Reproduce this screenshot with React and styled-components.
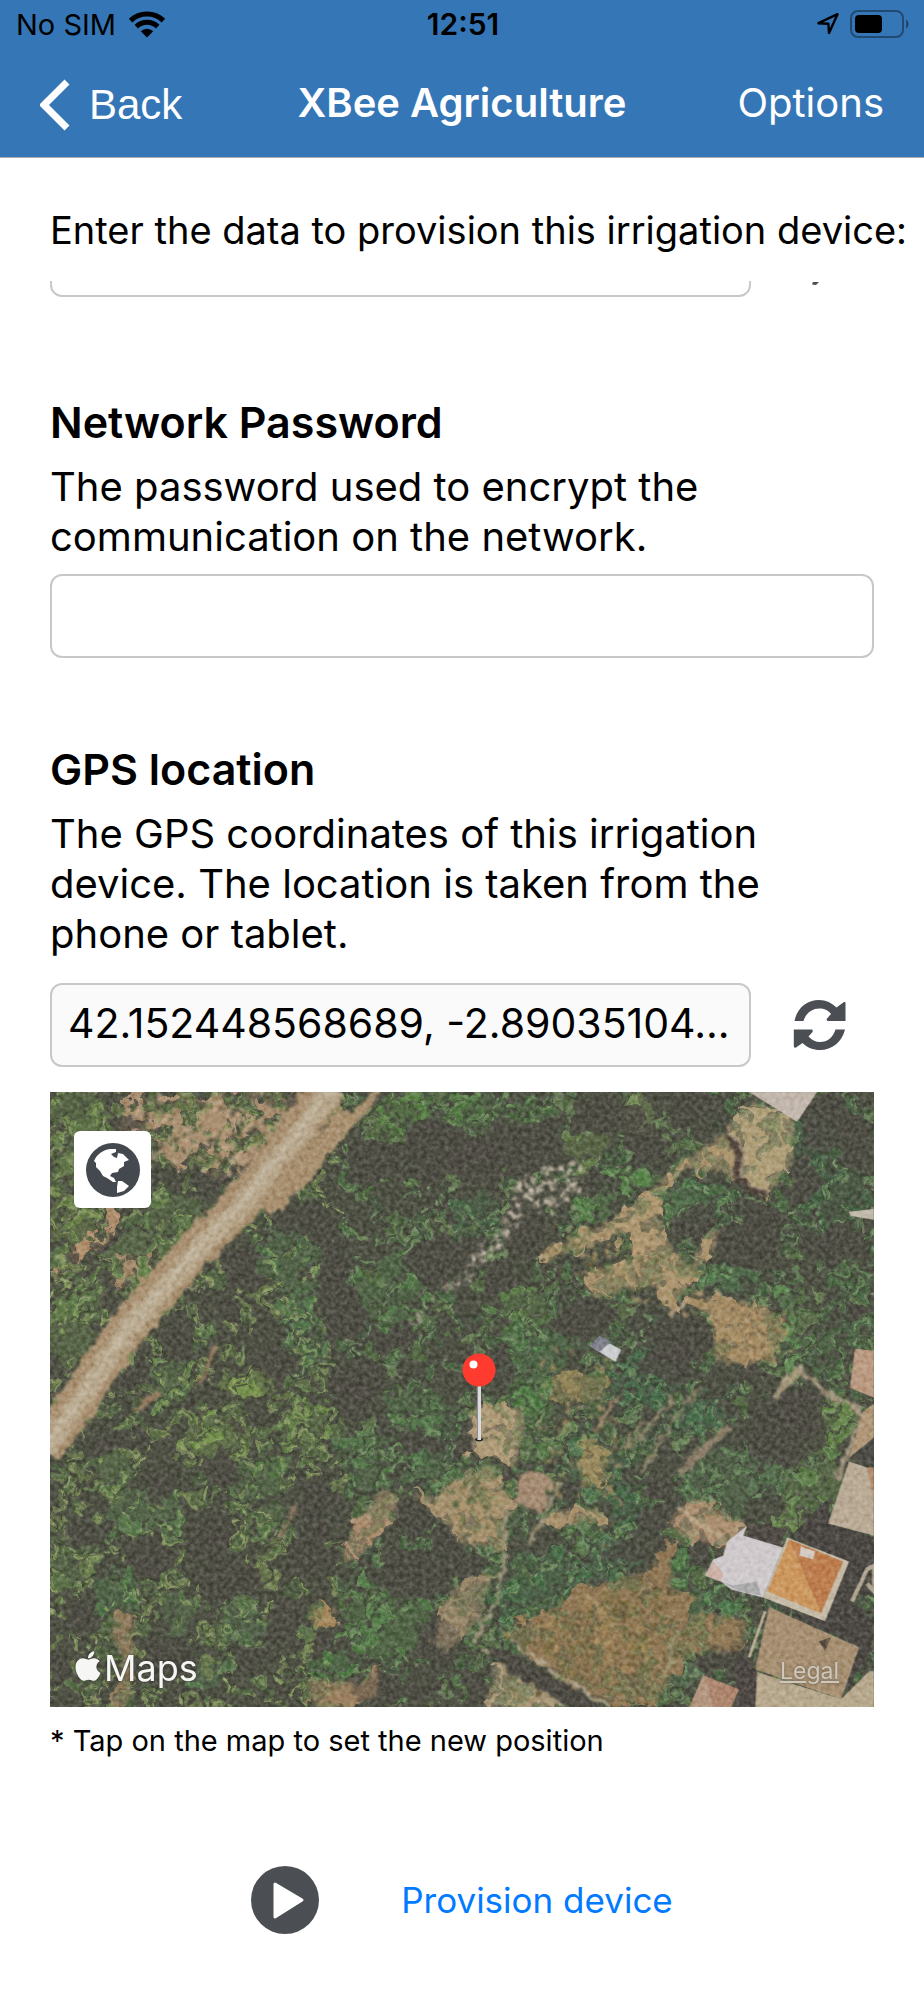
import React, { useState } from "react";
import styled, { createGlobalStyle } from "styled-components";
import { FaApple } from "react-icons/fa";

const GlobalStyle = createGlobalStyle`
  * {
    box-sizing: border-box;
  }
  body {
    margin: 0;
    background: #ffffff;
    color: #000000;
    font-family: Inter, "Liberation Sans", sans-serif;
  }
`;

// small seeded generator, so the trees stay in place between renders
const makeRandom = (seed) => () => {
    seed = (seed * 16807) % 2147483647;
    return seed / 2147483647;
};

// [cx, cy, rx, ry]
const shadows = [
    [384, 55, 40, 40], [324, 68, 30, 25], [251, 128, 35, 20], [278, 168, 18, 36], [191, 175, 25, 22],
    [291, 221, 24, 40], [171, 221, 20, 14], [384, 175, 30, 30], [131, 241, 18, 28], [224, 275, 25, 18],
    [311, 288, 30, 20], [60, 201, 14, 25], [84, 285, 20, 13], [344, 248, 25, 14], [168, 85, 20, 12],
    [74, 31, 22, 8], [51, 148, 20, 9], [251, 5, 18, 10], [468, 55, 50, 32], [428, 71, 30, 25],
    [561, 25, 40, 22], [598, 51, 25, 18], [644, 15, 30, 20], [544, 95, 16, 14], [474, 138, 25, 30],
    [448, 188, 18, 30], [421, 161, 18, 20], [644, 131, 25, 18], [694, 155, 34, 25], [711, 128, 20, 20],
    [778, 31, 28, 30], [804, 48, 18, 35], [751, 88, 18, 30], [788, 155, 35, 25], [538, 228, 35, 20],
    [634, 248, 35, 34], [618, 275, 30, 20], [451, 271, 18, 15], [698, 281, 20, 12], [811, 221, 12, 8],
    [304, 308, 25, 25], [368, 351, 30, 12], [174, 378, 22, 20], [114, 395, 20, 18], [268, 415, 20, 35],
    [158, 445, 25, 24], [101, 465, 25, 20], [178, 485, 40, 24], [258, 465, 30, 28], [361, 425, 30, 17],
    [364, 485, 45, 30], [238, 531, 22, 30], [118, 565, 25, 22], [198, 565, 20, 14], [344, 598, 50, 16],
    [31, 525, 25, 13], [11, 575, 12, 20], [274, 551, 15, 12], [398, 448, 15, 20], [728, 341, 42, 44],
    [751, 318, 25, 25], [458, 385, 15, 12], [614, 398, 22, 14], [604, 428, 18, 14], [524, 401, 14, 11],
    [578, 461, 20, 11], [648, 461, 16, 18], [421, 475, 15, 16], [417, 350, 8, 20], [428, 595, 16, 18],
    [671, 570, 32, 16], [391, 555, 26, 30], [66, 350, 26, 12], [30, 440, 18, 10],
];

// [cx, cy, rx, ry, colour]
const groves = [
    [40, 60, 40, 40, "#5f7a44"], [20, 110, 24, 50, "#6b8646"], [120, 130, 30, 30, "#5c7a45"],
    [80, 160, 26, 20, "#64824a"], [48, 200, 26, 26, "#5f8048"], [20, 240, 26, 40, "#617d46"],
    [350, 25, 26, 26, "#56863f"], [400, 12, 30, 14, "#4e7a3e"], [240, 170, 30, 40, "#507748"],
    [345, 200, 32, 40, "#507a45"], [255, 235, 22, 40, "#52794a"], [200, 290, 30, 16, "#7c9e4b"],
    [170, 345, 34, 24, "#74974a"], [120, 290, 24, 24, "#628649"], [150, 230, 22, 18, "#5d7f4c"],
    [95, 420, 40, 24, "#587c4b"], [320, 370, 28, 30, "#4f7546"], [370, 318, 34, 24, "#507a47"],
    [388, 375, 22, 22, "#4f7c48"], [70, 500, 24, 24, "#4d7a47"], [335, 530, 40, 40, "#507f44"],
    [280, 575, 24, 14, "#4c8043"], [210, 430, 26, 18, "#5c7e49"], [190, 530, 28, 16, "#53704a"],
    [160, 580, 18, 16, "#52754b"], [444, 22, 60, 16, "#4e7040"], [590, 20, 16, 24, "#7d9557"],
    [535, 60, 20, 20, "#667f45"], [545, 110, 20, 15, "#538545"], [580, 88, 20, 12, "#558647"],
    [425, 125, 26, 22, "#456a45"], [540, 245, 20, 14, "#4d6f46"], [470, 215, 30, 18, "#5a7f46"],
    [490, 260, 30, 24, "#4b7a45"], [480, 300, 22, 20, "#4c8042"], [595, 285, 36, 26, "#426d48"],
    [650, 108, 24, 20, "#4c7a49"], [620, 110, 18, 18, "#507848"], [680, 185, 34, 14, "#4f8a4e"],
    [740, 235, 12, 40, "#5d9150"], [770, 60, 30, 40, "#3f5c42"], [790, 100, 30, 40, "#40603f"],
    [800, 190, 20, 20, "#45693f"], [770, 260, 26, 20, "#4a6440"], [675, 385, 42, 36, "#53744c"],
    [490, 340, 24, 30, "#567b45"], [545, 380, 30, 28, "#47714a"], [580, 410, 22, 22, "#436b45"],
    [470, 430, 16, 14, "#4f7346"], [525, 436, 22, 12, "#4b6c42"], [560, 465, 26, 20, "#466f4a"],
    [500, 490, 46, 30, "#437045"], [470, 520, 24, 18, "#417244"], [630, 480, 14, 18, "#4c7f45"],
    [665, 520, 26, 26, "#4e7f4c"], [790, 330, 16, 26, "#668d45"], [765, 390, 30, 34, "#5e8347"],
    [740, 425, 16, 12, "#6b8b4c"], [636, 582, 18, 14, "#587f56"], [650, 320, 26, 20, "#44704a"],
    [430, 330, 10, 10, "#4c7044"], [25, 20, 30, 20, "#5e7c42"], [20, 470, 24, 30, "#5b7546"],
    [60, 380, 24, 20, "#5d7c48"], [210, 385, 30, 24, "#567a46"], [250, 330, 26, 26, "#648546"],
    [130, 520, 22, 18, "#58774a"],
];

const clearings = [
    { d: "M70 0 L262 0 L235 50 L190 90 L150 75 L110 70 L75 40 Z", fill: "#a4896b" },
    { d: "M55 118 L76 120 L50 150 L20 180 L4 195 L2 178 L35 145 Z", fill: "#ac8a67" },
    { d: "M64 175 L140 150 L110 200 L70 215 Z", fill: "#9c8363" },
    { d: "M490 160 L560 130 L600 98 L650 58 L676 40 L690 56 L696 85 L640 75 L606 104 L612 140 L640 180 L660 140 L672 142 L622 218 L600 190 L545 205 L536 180 L590 170 L580 140 L520 160 L496 172 Z", fill: "#a8906a" },
    { d: "M690 22 L705 8 L748 30 L740 76 L720 100 L686 82 L694 52 L676 38 Z", fill: "#aa9973" },
    { d: "M640 205 L716 212 L736 240 L722 265 L700 274 L662 268 L668 235 Z", fill: "#9f8760" },
    { d: "M420 320 L446 310 L474 318 L472 350 L466 376 L450 366 L424 366 Z", fill: "#ab9673" },
    { d: "M412 384 L440 376 L464 410 L450 440 L456 460 L412 450 L385 420 L360 402 L385 405 L411 385 Z", fill: "#a18c69" },
    { d: "M333 396 L350 410 L326 450 L298 472 L292 462 L304 436 Z", fill: "#a58768" },
    { d: "M502 420 L548 416 L556 430 L505 434 Z", fill: "#a48c68" },
    { d: "M646 406 L698 432 L680 456 L636 446 L618 434 L626 420 Z", fill: "#a6896a" },
    { d: "M606 462 L622 455 L622 496 L642 505 L636 530 L676 522 L700 530 L690 560 L640 560 L606 610 L560 616 L462 550 L454 544 L510 514 L540 496 L600 480 Z", fill: "#8b7350" },
    { d: "M446 574 L466 570 L530 616 L436 616 Z", fill: "#a49272" },
    { d: "M66 526 L84 524 L84 560 L78 616 L62 616 L74 570 L62 548 Z", fill: "#8c7758" },
    { d: "M262 515 L286 520 L278 536 L260 530 Z", fill: "#a28459" },
    { d: "M258 590 L310 592 L330 575 L326 604 L290 616 L264 614 Z", fill: "#967b5b" },
    { d: "M512 278 L560 288 L548 310 L500 308 Z", fill: "#8c7e53" },
    { d: "M536 348 L560 360 L552 390 L532 396 L528 370 Z", fill: "#958558" },
    { d: "M400 500 L436 480 L444 484 L430 530 L398 560 L384 552 Z", fill: "#938264" },
];

const walls = [
    { d: "M462 552 L520 590 L560 616", stroke: "#aca186", width: 3 },
    { d: "M434 558 L490 596 L512 616", stroke: "#b8ab8e", width: 3 },
    { d: "M424 552 L446 512 L456 470 L454 420", stroke: "#978c72", width: 4 },
    { d: "M510 392 L492 430 L478 456", stroke: "#8f866a", width: 4 },
    { d: "M674 36 L690 60 L686 88 L718 104", stroke: "#4c4038", width: 6 },
    { d: "M676 34 L694 58 L690 84 L718 100", stroke: "#9f8b78", width: 2 },
    { d: "M624 306 L586 350 L572 356", stroke: "#857c62", width: 4 },
    { d: "M650 296 L606 356 L592 382", stroke: "#857c62", width: 3 },
    { d: "M570 304 L544 340", stroke: "#997c62", width: 4 },
    { d: "M594 330 L572 356", stroke: "#857a5e", width: 3 },
    { d: "M680 334 L630 382", stroke: "#857661", width: 8 },
    { d: "M628 416 L672 448", stroke: "#b6a184", width: 4 },
    { d: "M724 308 L752 274", stroke: "#a09376", width: 7 },
    { d: "M752 276 L790 314", stroke: "#9f8f76", width: 4 },
    { d: "M780 300 L814 322 L806 346 L788 388", stroke: "#9d9079", width: 5 },
    { d: "M534 500 L574 546", stroke: "#a08a60", width: 3 },
    { d: "M624 566 L614 586 L628 540", stroke: "#989574", width: 2 },
    { d: "M640 205 L620 226", stroke: "#b69e7c", width: 4 },
    { d: "M166 255 L150 292", stroke: "#94785c", width: 5 },
    { d: "M108 300 L86 318", stroke: "#94785c", width: 5 },
    { d: "M246 414 L232 446", stroke: "#80705a", width: 4 },
];

const speckle = (random, colours, count, x1, y1, x2, y2, spread, size) =>
    Array.from({ length: count }, (_, i) => {
        const t = random();
        return {
            x: x1 + (x2 - x1) * t + (random() - 0.5) * spread,
            y: y1 + (y2 - y1) * t + (random() - 0.5) * spread,
            r: size * (0.5 + random()),
            fill: colours[i % colours.length],
        };
    });

const inEllipse = (x, y, size) => ([cx, cy, rx, ry]) =>
    ((x - cx) / rx) ** 2 + ((y - cy) / ry) ** 2 < size;

const olive = ["#5b6b43", "#556a42", "#4f6440", "#677848", "#4b5a3e", "#5a7345"];
const deep = ["#4a6141", "#46603f", "#50693f", "#455741", "#4b6b43", "#5a6d45"];

// every crown is a dark upper edge, a body, and a few sunlit leaves
const buildTrees = () => {
    const random = makeRandom(4217);
    const crowns = [];
    for (let i = 0; i < 2600; i++) {
        const x = random() * 850 - 12;
        const y = random() * 640 - 12;
        const grove = groves.find(inEllipse(x, y, 1.3));
        if (shadows.some(inEllipse(x, y, grove ? 0.6 : 0.9))) continue;
        const palette = x < 290 ? olive : deep;
        const r = 3 + random() * 5;
        const leaves = Array.from({ length: 3 }, () => ({
            x: x + (random() - 0.4) * r * 2,
            y: y + (random() - 0.4) * r * 2,
            r: 1 + random() * 2,
        }));
        const fill = grove && random() < 0.75 ? grove[4] : palette[Math.floor(random() * palette.length)];
        crowns.push({ x, y, r, fill, leaves, light: x < 290 ? "#96a568" : "#799665" });
    }
    return crowns;
};

const trees = buildTrees();
const random = makeRandom(913);
const gaps = speckle(random, ["#48463f", "#454a3c"], 700, 412, 0, 412, 616, 830, 3.4);
const rocks = [
    ...speckle(random, ["#b9ad9b", "#8f8776", "#c6bba8"], 80, 520, 84, 475, 112, 40, 2),
    ...speckle(random, ["#b9ad9b", "#8f8776", "#cdc3b2"], 50, 478, 114, 412, 188, 14, 1.7),
    ...speckle(random, ["#a99e89", "#8f8776"], 26, 412, 185, 360, 232, 10, 1.5),
];
const scrub = [
    ...speckle(random, ["#5a5543", "#63683f", "#c0a283"], 260, 110, 20, 225, 40, 90, 2.4),
    ...speckle(random, ["#6c5a3c", "#a98a58", "#6e6a3c"], 420, 490, 570, 620, 530, 80, 2),
    ...speckle(random, ["#6f5d42", "#bd9a6c"], 120, 680, 238, 730, 248, 50, 1.7),
    ...speckle(random, ["#6f6243", "#bda074", "#6b7547"], 170, 520, 160, 640, 200, 60, 2),
    ...speckle(random, ["#6d6845", "#b09468", "#566540"], 90, 410, 400, 450, 440, 50, 2),
    ...speckle(random, ["#9a8664", "#86794f", "#a28c60"], 110, 520, 290, 540, 420, 80, 2),
];

const SatelliteImage = () => (
    <svg viewBox="0 0 825 616" preserveAspectRatio="xMidYMid slice" aria-hidden="true">
        <defs>
            <filter id="ragged" x="0" y="0" width="100%" height="100%" colorInterpolationFilters="sRGB">
                <feTurbulence type="fractalNoise" baseFrequency="0.05" numOctaves="3" seed="8" result="n" />
                <feDisplacementMap in="SourceGraphic" in2="n" scale="34" xChannelSelector="R" yChannelSelector="G" />
                <feGaussianBlur stdDeviation="0.7" />
            </filter>
            <filter id="rough" x="-5%" y="-5%" width="110%" height="110%" colorInterpolationFilters="sRGB">
                <feTurbulence type="fractalNoise" baseFrequency="0.1" numOctaves="2" seed="3" result="n" />
                <feDisplacementMap in="SourceGraphic" in2="n" scale="12" xChannelSelector="R" yChannelSelector="G" />
                <feGaussianBlur stdDeviation="0.8" />
            </filter>
            <filter id="grain" x="0" y="0" width="100%" height="100%" colorInterpolationFilters="sRGB">
                <feTurbulence type="fractalNoise" baseFrequency="0.22" numOctaves="2" seed="21" />
                <feColorMatrix values="1.2 0 0 0 0.02  1.2 0 0 0 0.02  1.2 0 0 0 0.02  0 0 0 0 1" />
            </filter>
            <filter id="soft">
                <feGaussianBlur stdDeviation="0.6" />
            </filter>
        </defs>

        <rect width="825" height="616" fill="#484a3e" />
        <g filter="url(#ragged)">
            <rect x="-20" y="-20" width="865" height="656" fill="#484a3e" />
            {groves.map(([cx, cy, rx, ry, fill], i) => (
                <ellipse key={i} cx={cx} cy={cy} rx={rx} ry={ry} fill={fill} opacity="0.4" />
            ))}
            {clearings.map((c) => (
                <path key={c.d} d={c.d} fill={c.fill} />
            ))}
            {trees.map((t, i) => (
                <g key={i}>
                    <circle cx={t.x - 2} cy={t.y - 3} r={t.r} fill="#45473c" opacity="0.75" />
                    <circle cx={t.x} cy={t.y} r={t.r} fill={t.fill} opacity="0.75" />
                    {t.leaves.map((leaf, j) => (
                        <circle key={j} cx={leaf.x} cy={leaf.y} r={leaf.r} fill={t.light} opacity="0.5" />
                    ))}
                </g>
            ))}
            {gaps.map((s, i) => (
                <circle key={i} cx={s.x} cy={s.y} r={s.r} fill={s.fill} opacity="0.8" />
            ))}
            {shadows.map(([cx, cy, rx, ry], i) => (
                <ellipse key={i} cx={cx} cy={cy} rx={rx * 0.85} ry={ry * 0.85} fill="#48463f" opacity="0.8" />
            ))}
        </g>

        <g filter="url(#rough)">
            <g opacity="0.5">
                {clearings.slice(3).map((c) => (
                    <path key={c.d} d={c.d} fill={c.fill} />
                ))}
            </g>
            {scrub.map((s, i) => (
                <circle key={i} cx={s.x} cy={s.y} r={s.r} fill={s.fill} opacity="0.7" />
            ))}
            {rocks.map((s, i) => (
                <circle key={i} cx={s.x} cy={s.y} r={s.r} fill={s.fill} />
            ))}
            <path d="M330 -4 L306 26 L270 60 L236 88" fill="none" stroke="#a38a69" strokeWidth="8" />
            <path d="M300 20 L252 82 L212 118" fill="none" stroke="#a38a69" strokeWidth="22" />
            <path d="M278 -4 L236 54 L191 113 L148 155 L76 238 L30 308 L-6 358" fill="none" stroke="#a48b6b" strokeWidth="38" />
            <path d="M284 -4 L238 56 L191 115 L150 156 L76 240 L32 306 L-6 360" fill="none" stroke="#b3a286" strokeWidth="20" />
            <path d="M282 -4 L234 58 L188 115 L148 156 L74 241 L30 306 L-6 356" fill="none" stroke="#bdb098" strokeWidth="5" />
            {walls.map((w) => (
                <path key={w.d} d={w.d} fill="none" stroke={w.stroke} strokeWidth={w.width} />
            ))}
            <path d="M440 554 L460 560 L556 616 L516 616 L440 566 Z" fill="#46443c" />
            <path d="M471 384 L488 380 L502 388 L498 410 L490 420 L466 410 Z" fill="#a0866d" />
        </g>

        {/* houses and the shade they throw */}
        <g filter="url(#soft)">
            <path d="M700 0 L768 0 L748 30 Z" fill="#bfb3a8" />
            <path d="M800 120 L825 117 L825 128 L801 124 Z" fill="#bcb5a5" />
            <path d="M540 254 L550 246 L572 258 L566 270 Z" fill="#c9cbcc" />
            <path d="M540 254 L550 244 L562 250 L550 260 Z" fill="#7b7c88" />
            <path d="M806 257 L825 259 L825 306 L801 296 Z" fill="#b6957b" />
            <path d="M814 320 L825 312 L825 346 L800 366 Z" fill="#ab9272" />
            <path d="M802 366 L825 346 L825 374 Z" fill="#47443f" />
            <path d="M741 445 L780 406 L780 432 L825 446 L825 506 L808 498 L800 508 L825 530 L822 560 L795 600 L810 556 L740 522 L775 526 L797 470 Z" fill="#44423e" />
            <path d="M699 434 L716 432 L736 440 L732 455 L698 446 Z" fill="#4c4541" />
            <path d="M698 434 L694 444 L734 456 L714 506 L682 498 L672 490 L656 484 L664 468 L674 464 L678 450 Z" fill="#ccc6c9" />
            <path d="M672 490 L684 494 L708 490 L712 504 L690 500 Z" fill="#a8a7a8" />
            <path d="M656 484 L664 470 L674 482 L672 490 Z" fill="#c9ada1" />
            <path d="M738 446 L800 470 L776 530 L714 506 Z" fill="#c2b7a3" />
            <path d="M740 448 L772 522 L718 500 Z" fill="#c89259" />
            <path d="M740 448 L794 470 L772 522 Z" fill="#b97746" />
            <path d="M752 455 L766 460 L764 468 L750 464 Z" fill="#d0c8c0" />
            <path d="M800 370 L818 376 L825 400 L825 444 L779 432 Z" fill="#b5a590" />
            <path d="M818 376 L825 376 L825 412 Z" fill="#b08b6b" />
            <path d="M720 516 L810 556 L792 608 L706 578 Z" fill="#a28a6c" />
            <path d="M706 580 L736 590 L792 608 L820 580 L825 580 L825 616 L706 616 Z" fill="#b3a488" />
            <path d="M690 562 L708 580 L706 616 L686 616 Z" fill="#46433e" />
            <path d="M654 584 L690 598 L682 616 L640 616 Z" fill="#a98068" />
            <path d="M654 584 L658 586 L664 616 L640 616 Z" fill="#b0917a" />
            <path d="M716 520 L700 566" stroke="#b5a890" strokeWidth="3" />
            <path d="M803 510 L818 478 L825 474 L825 500 L818 492" fill="none" stroke="#ada18b" strokeWidth="4" />
            <path d="M770 550 L782 546 L776 560 Z" fill="#544a3c" />
        </g>

        <rect className="grain" width="825" height="616" filter="url(#grain)" />
    </svg>
);

const WifiIcon = () => (
    <svg width="38" height="28" viewBox="0 0 38 28" aria-hidden="true">
        <g fill="none" stroke="#000" strokeWidth="5">
            <path d="M2.6 10.6 A23.6 23.6 0 0 1 35.4 10.6" />
            <path d="M8.3 16.6 A15.4 15.4 0 0 1 29.7 16.6" />
        </g>
        <path d="M12.8 21.2 A8.9 8.9 0 0 1 25.2 21.2 L19 27.6 Z" />
    </svg>
);

const ArrowIcon = () => (
    <svg width="24" height="24" viewBox="0 0 24 24" aria-hidden="true">
        <path d="M2.5 11.2 L21.5 2.2 L13 21 L12.4 11.8 Z" fill="none" stroke="#000" strokeWidth="2.4" strokeLinejoin="round" />
    </svg>
);

const BatteryIcon = () => (
    <svg width="60" height="28" viewBox="0 0 60 28" aria-hidden="true">
        <rect x="1" y="1" width="52" height="26" rx="7" fill="none" stroke="#214a73" strokeWidth="2" />
        <rect x="5" y="5" width="27" height="18" rx="4" />
        <path d="M56 9.500 A5 5 0 0 1 56 18.500 Z" fill="#214a73" />
    </svg>
);

const ChevronIcon = () => (
    <svg width="30" height="52" viewBox="0 0 30 52" aria-hidden="true">
        <path d="M27 3 L4 26 L27 49" fill="none" stroke="#fff" strokeWidth="7" />
    </svg>
);

const RefreshIcon = () => (
    <svg width="54" height="52" viewBox="0 0 54 52" aria-hidden="true">
        <g fill="#4b4f54">
            <path d="M1.500 22 C4 9 14 1 26 1 C33 1 39 4 43.500 8.500 L51 3 Q52.500 2.600 52.500 4 L52.500 22 L34.500 22 Q33 21 34 19.500 L38 15 C35 11 31 9.500 26.500 9.500 C19 9.500 13 14 10.500 22 Z" />
            <path d="M52 30.500 C49 43 39 51 27 51 C20 51 14 48.500 9.500 44 L3 48.500 Q.8 49.500 .8 47 L.8 30.500 L19 30.500 Q20.500 31.500 19.500 33 L15.500 37.500 C18.500 41 22.500 43 27 43 C34.500 43 40 38.500 42.500 30.500 Z" />
        </g>
    </svg>
);

const GlobeIcon = () => (
    <svg width="54" height="54" viewBox="0 0 54 54" aria-hidden="true">
        <circle cx="27" cy="27" r="27" fill="#44484f" />
        <g fill="#fff">
            <path d="M8 18 C11 11 17 7 24 6 L30 6 L30 9 L25 11 L28 14 L31 15 L32 10 L37 11 L43 17 L38 19 L38 23 L33 26 L32 29 L26 30 L24 33 L28 35 L30 39 L27 39 L21 35 L17 33 L14 28 L10 24 L10 20 Z" />
            <path d="M32 38 L36 38 L43 43 L38 48 L31 50 L31 44 Z" />
        </g>
    </svg>
);

const PlayIcon = () => (
    <svg width="68" height="68" viewBox="0 0 68 68" aria-hidden="true">
        <circle cx="34" cy="34" r="34" fill="#4b4f54" />
        <path d="M24 18 L51 34 L24 51 Z" fill="#fff" stroke="#fff" strokeWidth="3" strokeLinejoin="round" />
    </svg>
);

const PinIcon = () => (
    <svg width="34" height="90" viewBox="0 0 34 90" aria-hidden="true">
        <ellipse cx="17" cy="86.500" rx="4" ry="1.800" fill="#222" />
        <rect x="15" y="30" width="4" height="57" fill="#d9d9de" />
        <rect x="15" y="30" width="1" height="57" fill="#8d8d96" />
        <circle cx="17" cy="17" r="16.500" fill="#ff3b30" />
        <circle cx="11.500" cy="11.500" r="4" fill="#fff" />
    </svg>
);

const App = () => {
    const [password, setPassword] = useState("");

    return (
        <Page>
            <GlobalStyle />
            <Header>
                <StatusBar>
                    <Carrier>
                        No SIM
                        <WifiIcon />
                    </Carrier>
                    <Clock>12:51</Clock>
                    <Indicators>
                        <ArrowIcon />
                        <BatteryIcon />
                    </Indicators>
                </StatusBar>
                <NavBar>
                    <BackButton type="button">
                        <ChevronIcon />
                        Back
                    </BackButton>
                    <Title>XBee Agriculture</Title>
                    <OptionsButton type="button">Options</OptionsButton>
                </NavBar>
            </Header>
            <Intro>Enter the data to provision this irrigation device:</Intro>
            <Form>
                <ScrolledRow>
                    <TextInput type="text" aria-label="Previous field" />
                    <IconButton type="button" aria-label="Help">
                        <svg width="54" height="16" viewBox="0 0 54 16" aria-hidden="true">
                            <path d="M20 1 L26 1 L23 4 L19 3.500 Z" fill="#4b4f54" />
                        </svg>
                    </IconButton>
                </ScrolledRow>
                <Field>
                    <Label htmlFor="password">Network Password</Label>
                    <Description>The password used to encrypt the communication on the network.</Description>
                    <TextInput
                        id="password"
                        type="password"
                        value={password}
                        onChange={(e) => setPassword(e.target.value)}
                    />
                </Field>
                <Field>
                    <Label htmlFor="location">GPS location</Label>
                    <Description $spaced>
                        The GPS coordinates of this irrigation device. The location is taken from the phone or tablet.
                    </Description>
                    <InputRow>
                        <TextInput id="location" type="text" readOnly value="42.152448568689, -2.89035104..." />
                        <IconButton type="button" aria-label="Refresh location">
                            <RefreshIcon />
                        </IconButton>
                    </InputRow>
                    <Map>
                        <SatelliteImage />
                        <MapTypeButton type="button" aria-label="Change map type">
                            <GlobeIcon />
                        </MapTypeButton>
                        <Pin>
                            <PinIcon />
                        </Pin>
                        <MapBrand>
                            <FaApple aria-hidden="true" />
                            Maps
                        </MapBrand>
                        <LegalLink href="#legal">Legal</LegalLink>
                    </Map>
                    <Note>* Tap on the map to set the new position</Note>
                </Field>
            </Form>
            <ProvisionButton type="button">
                <PlayIcon />
                Provision device
            </ProvisionButton>
        </Page>
    );
};

const Page = styled.div`
  display: flex;
  flex-direction: column;
  overflow: hidden;
  svg {
    display: block;
    flex-shrink: 0;
  }
`;

const Header = styled.header`
  background: #3576b7;
  border-bottom: 1px solid #a9abb0;
`;

const StatusBar = styled.div`
  display: grid;
  grid-template-columns: 1fr auto 1fr;
  align-items: center;
  height: 48px;
  padding: 0 14px 0 16px;
  font-size: 29px;
`;

const Carrier = styled.span`
  display: flex;
  align-items: center;
  gap: 12px;
`;

const Clock = styled.time`
  font-size: 30px;
  font-weight: 600;
`;

const Indicators = styled.div`
  display: flex;
  align-items: center;
  justify-content: flex-end;
  gap: 10px;
`;

const NavBar = styled.nav`
  display: grid;
  grid-template-columns: 1fr auto 1fr;
  align-items: center;
  height: 109px;
  padding: 0 40px;
  color: #ffffff;
`;

const NavButton = styled.button`
  padding: 0;
  border: none;
  background: none;
  color: inherit;
  font-family: inherit;
  font-size: 40px;
  cursor: pointer;
`;

const BackButton = styled(NavButton)`
  display: flex;
  align-items: center;
  gap: 19px;
  justify-self: start;
  padding-top: 4px;
  font-family: "Liberation Sans", sans-serif;
  font-size: 42px;
`;

const OptionsButton = styled(NavButton)`
  justify-self: end;
`;

const Title = styled.h1`
  margin: 0;
  font-size: 40px;
  font-weight: 600;
`;

const Intro = styled.p`
  margin: 0;
  padding: 47px 0 26px 50px;
  font-size: 38px;
  line-height: 50px;
  white-space: nowrap;
`;

const Form = styled.form`
  display: flex;
  flex-direction: column;
  padding: 0 50px;
`;

const TextInput = styled.input`
  flex: 1;
  width: 100%;
  min-width: 0;
  height: 84px;
  padding: 0 16px 4px;
  border: 2px solid #c8c8c8;
  border-radius: 12px;
  background: #ffffff;
  color: #000000;
  font-family: inherit;
  font-size: 41px;
  &:read-only {
    background: #fafafa;
  }
`;

const InputRow = styled.div`
  display: flex;
  align-items: center;
  gap: 42px;
`;

const ScrolledRow = styled(InputRow)`
  align-items: flex-end;
  height: 16px;
  overflow: hidden;
  ${TextInput} {
    flex-shrink: 0;
  }
`;

const IconButton = styled.button`
  padding: 0;
  margin-right: 27px;
  border: none;
  background: none;
  cursor: pointer;
`;

const Field = styled.section`
  display: flex;
  flex-direction: column;
  padding-top: 97px;
  & + & {
    padding-top: 83px;
  }
  > ${TextInput} {
    flex: none;
  }
`;

const Label = styled.label`
  font-size: 43px;
  font-weight: 600;
  line-height: 56px;
`;

const Description = styled.p`
  max-width: 90%;
  margin: 12px 0 ${(props) => (props.$spaced ? "24px" : "12px")};
  font-size: 40px;
  line-height: 50px;
`;

const Map = styled.div`
  position: relative;
  margin-top: 25px;
  overflow: hidden;
  aspect-ratio: 825 / 616;
  > svg {
    width: 100%;
    height: 100%;
  }
  .grain {
    mix-blend-mode: soft-light;
    opacity: 0.5;
  }
`;

const MapTypeButton = styled.button`
  position: absolute;
  top: 39px;
  left: 24px;
  display: grid;
  place-items: center;
  width: 77px;
  height: 77px;
  padding: 0;
  border: none;
  border-radius: 6px;
  background: #ffffff;
  cursor: pointer;
`;

const Pin = styled.div`
  position: absolute;
  left: 50%;
  bottom: 43%;
`;

const MapBrand = styled.div`
  position: absolute;
  left: 24px;
  bottom: 17px;
  display: flex;
  align-items: center;
  gap: 2px;
  color: #f6f6f4;
  font-size: 36px;
  line-height: 44px;
  text-shadow: 0 0 3px #33332f;
  svg {
    width: 28px;
    height: 34px;
    margin-bottom: 4px;
    filter: drop-shadow(0 0 1px #33332f);
  }
`;

const LegalLink = styled.a`
  position: absolute;
  right: 35px;
  bottom: 22px;
  color: #cfc7ba;
  font-size: 23px;
  line-height: 28px;
  text-shadow: 0 0 3px #6b6252;
`;

const Note = styled.p`
  margin: 16px 0 0;
  font-size: 29px;
  line-height: 36px;
`;

const ProvisionButton = styled.button`
  display: flex;
  align-items: center;
  align-self: center;
  gap: 82px;
  margin: 107px 0 64px;
  padding: 0;
  border: none;
  background: none;
  color: #007aff;
  font-family: inherit;
  font-size: 35px;
  cursor: pointer;
`;

export default App;
